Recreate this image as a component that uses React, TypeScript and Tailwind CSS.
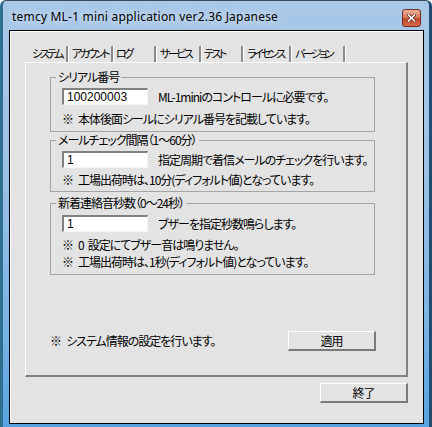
import React from "react";

const jp = "font-['Noto_Sans_CJK_JP',sans-serif] [font-feature-settings:'palt'] text-[12px] leading-[14px] text-black tracking-[-1px] whitespace-nowrap";
const jpTab = "font-['Noto_Sans_CJK_JP',sans-serif] [font-feature-settings:'palt'] text-[11px] leading-[14px] text-black tracking-[-2.5px] whitespace-nowrap";

function Input({ value }: { value: string }) {
  return (
    <div className="w-[86px] h-[17px] bg-white border-t-2 border-l-2 border-b border-r border-t-[#808080] border-l-[#808080] border-b-[#f4f4f4] border-r-[#f4f4f4] flex items-center pl-[3px] font-['Liberation_Sans',sans-serif] text-[12px] leading-[14px]">
      {value}
    </div>
  );
}

function Btn({ label }: { label: string }) {
  return (
    <div className="w-[88px] h-[20px] border-t border-l border-t-white border-l-white border-b-2 border-r-2 border-b-[#7a7a7a] border-r-[#7a7a7a] flex items-center justify-center">
      <span className={jp}>{label}</span>
    </div>
  );
}

function Note({ children, className = "" }: { children: React.ReactNode; className?: string }) {
  return (
    <div className={`flex ${jp} ${className}`}>
      <span>※</span>
      <span className="ml-[5px]">{children}</span>
    </div>
  );
}

function Group({ title, children, className }: { title: string; children: React.ReactNode; className: string }) {
  return (
    <fieldset className={`ml-[24px] w-[325px] border border-[#a4a4a4] ${className}`}>
      <legend className={`ml-[5px] px-[2px] ${jp}`}>{title}</legend>
      <div className="pl-[11px]">{children}</div>
    </fieldset>
  );
}

const tabs: { label: string; w: string }[] = [
  { label: "システム", w: "w-[41px] pl-[5px]" },
  { label: "アカウント", w: "w-[45px] pl-[4px]" },
  { label: "ログ", w: "w-[43px] pl-[3px]" },
  { label: "サービス", w: "w-[45px] pl-[4px]" },
  { label: "テスト", w: "w-[42px] pl-[3px]" },
  { label: "ライセンス", w: "w-[48px] pl-[4px]" },
  { label: "バージョン", w: "w-[54px] pl-[4px]" },
];

export default function App() {
  return (
    <div className="relative w-[432px] h-[427px] overflow-hidden rounded-t-[6px] border-t border-t-[#3d4d60] border-l-[3px] border-l-[#2f6f90] border-r-[3px] border-r-[#1f4d72] bg-[linear-gradient(180deg,#a9c8e8_0%,#a0c3e6_35%,#7cb4e4_75%,#58a4e0_100%)]">
      {/* title bar */}
      <div className="h-[29px] flex items-start justify-between pl-[9px] pr-[8px]">
        <span className="mt-[9px] font-['Noto_Sans',sans-serif] text-[12px] leading-[14px] tracking-[0.2px] text-black [text-shadow:0_0_6px_rgba(255,255,255,0.9)]">
          temcy ML-1 mini application ver2.36 Japanese
        </span>
        <div className="mt-[8px] w-[19px] h-[18px] rounded-[3px] border border-[#7a2a1c] bg-[linear-gradient(180deg,#eab098_0%,#d87a60_45%,#c0442c_55%,#d86a4c_100%)] flex items-center justify-center">
          <svg width="9" height="8" viewBox="0 0 9 8">
            <path d="M1.5 1 L7.5 7 M7.5 1 L1.5 7" stroke="#5a2018" strokeWidth="3" strokeLinecap="square" />
            <path d="M1.5 1 L7.5 7 M7.5 1 L1.5 7" stroke="#ffffff" strokeWidth="1.6" strokeLinecap="square" />
          </svg>
        </div>
      </div>

      {/* client */}
      <div className="ml-[6px] w-[415px] h-[394px] border border-black bg-[#e3e3e3] shadow-[inset_1px_1px_0_#ffffff] flex flex-col">
        <div className="ml-[15px] mt-[13px] w-[383px] flex flex-col">
          {/* tabs */}
          <div className="h-[18px] flex pl-[2px]">
            {tabs.map((t) => (
              <div
                key={t.label}
                className={`${t.w} mt-[2px] h-[16px] overflow-hidden border-r-2 border-r-[#8a8a8a] shadow-[1px_0_0_#ffffff] ${jpTab}`}
              >
                {t.label}
              </div>
            ))}
          </div>
          {/* panel */}
          <div className="h-[315px] border-t border-l border-t-white border-l-white border-r-2 border-b-2 border-r-[#808080] border-b-[#808080] flex flex-col">
            <Group title="シリアル番号" className="mt-[7px] pb-[5px]">
              <div className="pt-[4px] flex items-center">
                <Input value="100200003" />
                <span className={`ml-[10px] ${jp}`}>ML-1miniのコントロールに必要です。</span>
              </div>
              <Note className="mt-[7px]">本体後面シールにシリアル番号を記載しています。</Note>
            </Group>
            <Group title="メールチェック間隔（1～60分）" className="mt-[1px] pb-[4px]">
              <div className="pt-[4px] flex items-center">
                <Input value="1" />
                <span className={`ml-[10px] ${jp}`}>指定周期で着信メールのチェックを行います。</span>
              </div>
              <Note className="mt-[5px]">工場出荷時は、10分(ディフォルト値)となっています。</Note>
            </Group>
            <Group title="新着連絡音秒数（0～24秒）" className="mt-[4px] pb-[5px]">
              <div className="pt-[5px] flex items-center">
                <Input value="1" />
                <span className={`ml-[10px] ${jp}`}>ブザーを指定秒数鳴らします。</span>
              </div>
              <Note className="mt-[6px]">
                <span>0</span>
                <span className="ml-[4px]">設定にてブザー音は鳴りません。</span>
              </Note>
              <Note className="mt-[3px]">工場出荷時は、1秒(ディフォルト値)となっています。</Note>
            </Group>
            <div className="ml-[24px] mt-[56px] w-[326px] flex items-center justify-between">
              <Note>システム情報の設定を行います。</Note>
              <Btn label="適用" />
            </div>
          </div>
        </div>
        <div className="ml-[310px] mt-[6px]">
          <Btn label="終了" />
        </div>
      </div>
    </div>
  );
}
